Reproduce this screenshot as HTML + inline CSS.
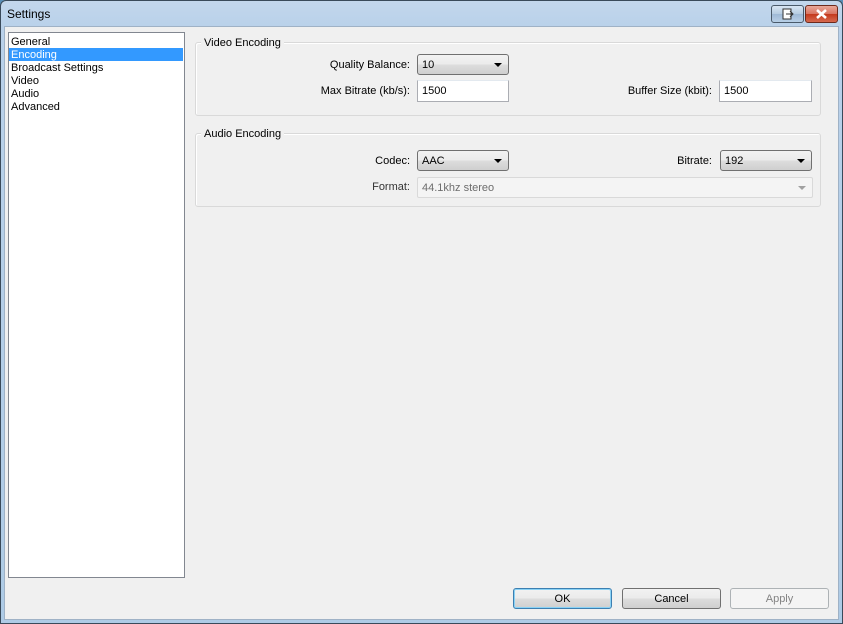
<!DOCTYPE html>
<html><head><meta charset="utf-8"><style>
*{box-sizing:border-box;margin:0;padding:0}
body{width:843px;height:624px;overflow:hidden;background:#5a8fb8;font-family:"Liberation Sans",Tahoma,sans-serif;font-size:11px;color:#000;position:relative}
.frame{position:absolute;left:0;top:0;width:843px;height:624px;background:linear-gradient(#c3d7ec,#b9d1ea 26px,#aecbe6);border:1px solid #3a4a5a;border-radius:6px 6px 0 0}
.title{position:absolute;left:7px;top:7px;font-size:12px;color:#000}
.client{position:absolute;left:4px;top:26px;width:835px;height:594px;background:#f0f0f0;border:1px solid #9fb2c6}
.abs{position:absolute}
.list{left:8px;top:32px;width:177px;height:546px;background:#fff;border:1px solid #828790}
.list div{height:13px;line-height:14px;padding-left:2px;font-size:11px}
.sel{background:#3399ff;color:#fff;margin-right:1px}
.grp{border:1px solid #d9d9d9;border-radius:3px;box-shadow:inset 1px 1px 0 #fff}
.gt{background:#f0f0f0;padding:0 3px;font-size:11px}
.lbl{font-size:11px;text-align:right}
.edit{background:#fff;border:1px solid #abadb3;border-top-color:#e3e9ef;height:22px;line-height:21px;padding-left:4px}
.combo{border:1px solid #707070;border-radius:3px;background:linear-gradient(#f2f2f2,#ebebeb 50%,#dddddd 51%,#cfcfcf);height:21px;line-height:21px;padding-left:4px}
.combo:after,.dis:after{content:"";position:absolute;right:6px;top:8px;border-left:4px solid transparent;border-right:4px solid transparent;border-top:4px solid #000}
.dis{background:#f4f4f4;border:1px solid #d9d9d9;border-radius:2px;height:21px;line-height:20px;padding-left:4px;color:#6d6d6d}
.dis:after{border-top-color:#a0a0a0}
.btn{height:21px;border:1px solid #707070;border-radius:3px;background:linear-gradient(#f2f2f2,#ebebeb 50%,#dddddd 51%,#cfcfcf);text-align:center;line-height:20px;font-size:11px}
.tb{border-radius:3px;border:1px solid #4a5a6a}
</style></head><body>
<div class="frame"></div>
<div class="title">Settings</div>
<div class="abs tb" style="left:771px;top:5px;width:33px;height:18px;background:linear-gradient(#d9e6f3,#b5cbe1 50%,#9fb9d6 51%,#b8cfe6)">
<svg width="31" height="16" style="position:absolute;left:0;top:0"><rect x="11" y="3" width="8" height="10" fill="#fff" stroke="#333"/><path d="M14 8h7M18 5l3 3-3 3" stroke="#333" fill="none"/></svg></div>
<div class="abs tb" style="left:805px;top:5px;width:33px;height:18px;background:linear-gradient(#e9a799,#d8735f 50%,#c4391c 51%,#d6694f);border-color:#6d2a1c">
<svg width="31" height="16" style="position:absolute;left:0;top:0"><path d="M11 4l9 8M20 4l-9 8" stroke="#fff" stroke-width="2.6"/></svg></div>
<div class="client"></div>
<div class="abs list">
<div style="margin-top:2px">General</div><div class="sel">Encoding</div><div>Broadcast Settings</div><div>Video</div><div>Audio</div><div>Advanced</div>
</div>
<div class="abs grp" style="left:195px;top:42px;width:626px;height:74px"></div>
<div class="abs gt" style="left:201px;top:37px">Video Encoding</div>
<div class="abs lbl" style="left:260px;top:59px;width:150px">Quality Balance:</div>
<div class="abs combo" style="left:417px;top:54px;width:92px">10</div>
<div class="abs lbl" style="left:260px;top:85px;width:150px">Max Bitrate (kb/s):</div>
<div class="abs edit" style="left:417px;top:80px;width:92px">1500</div>
<div class="abs lbl" style="left:560px;top:85px;width:152px">Buffer Size (kbit):</div>
<div class="abs edit" style="left:719px;top:80px;width:93px">1500</div>
<div class="abs grp" style="left:195px;top:133px;width:626px;height:74px"></div>
<div class="abs gt" style="left:201px;top:128px">Audio Encoding</div>
<div class="abs lbl" style="left:260px;top:155px;width:150px">Codec:</div>
<div class="abs combo" style="left:417px;top:150px;width:92px">AAC</div>
<div class="abs lbl" style="left:560px;top:155px;width:152px">Bitrate:</div>
<div class="abs combo" style="left:720px;top:150px;width:92px">192</div>
<div class="abs lbl" style="left:260px;top:181px;width:150px;color:#333">Format:</div>
<div class="abs dis" style="left:417px;top:177px;width:396px">44.1khz stereo</div>
<div class="abs btn" style="left:513px;top:588px;width:99px;border-color:#3c7fb1;box-shadow:inset 0 0 0 1px #8ad2f5">OK</div>
<div class="abs btn" style="left:622px;top:588px;width:99px">Cancel</div>
<div class="abs btn" style="left:730px;top:588px;width:99px;background:#f4f4f4;border-color:#adb2b5;color:#838383">Apply</div>
</body></html>
